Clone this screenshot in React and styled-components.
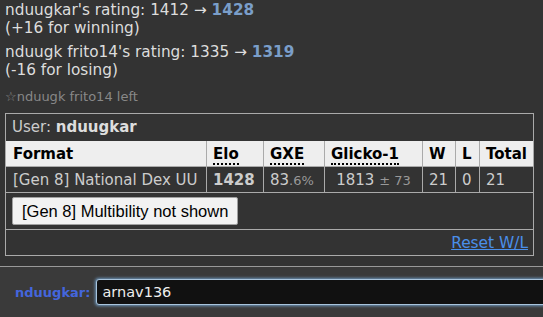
import React from "react";
import styled, { createGlobalStyle } from "styled-components";

const GlobalStyle = createGlobalStyle`
  html, body {
    margin: 0;
    padding: 0;
    background: #333;
  }
  body {
    font-family: "DejaVu Sans", Verdana, sans-serif;
    font-size: 15.3px;
    color: #ddd;
  }
`;

const Page = styled.div`
  width: 543px;
  height: 317px;
  display: flex;
  flex-direction: column;
  overflow: hidden;
`;

const ChatLog = styled.div`
  flex: 1;
  padding: 1px 9px 0 5px;
  overflow: hidden;
`;

const Message = styled.div`
  line-height: 18px;
  margin-bottom: 6px;
`;

const NewRating = styled.strong`
  color: #7a9ec9;
`;

const Notice = styled.div`
  font-size: 13px;
  color: #888;
  line-height: 16px;
  margin: 10px 0 8px;
`;

const Box = styled.div`
  border: 1px solid #aaa;
  background: #333;
`;

const UserRow = styled.div`
  height: 27px;
  line-height: 27px;
  padding-left: 6px;
  font-size: 15px;
  color: #ccc;
  strong {
    color: #ddd;
  }
`;

const Table = styled.table`
  width: 100%;
  table-layout: fixed;
  border-collapse: collapse;
  font-size: 15px;
  white-space: nowrap;
`;

const Th = styled.th`
  background: #eee;
  color: #000;
  text-align: left;
  height: 25px;
  padding: 0 6px;
  border: 1px solid #aaa;
  border-top: 0;
  width: ${(p) => (p.$w ? `${p.$w}px` : "auto")};
  &:first-child { border-left: 0; padding: 0 2px 0 7px; }
  &:last-child { border-right: 0; }
`;

const Abbr = styled.span`
  border-bottom: 2px dotted #000;
`;

const Td = styled.td`
  height: 25px;
  padding: 0 6px;
  color: #ccc;
  border: 1px solid #aaa;
  overflow: hidden;
  text-align: ${(p) => (p.$center ? "center" : "left")};
  &:first-child { border-left: 0; padding: 0 2px 0 7px; }
  &:last-child { border-right: 0; }
`;

const Faint = styled.small`
  font-size: 13px;
  color: #999;
`;

const ButtonRow = styled.div`
  height: 36px;
  display: flex;
  align-items: center;
  padding-left: 6px;
  border-bottom: 1px solid #aaa;
`;

const GreyButton = styled.button`
  height: 28px;
  padding: 0 9px;
  background: #f2f2f2;
  border: 1px solid #a0a0a0;
  border-radius: 2px;
  font-family: "Liberation Sans", Arial, sans-serif;
  font-size: 16.5px;
  color: #000;
`;

const LinkRow = styled.div`
  height: 25px;
  display: flex;
  justify-content: flex-end;
  align-items: center;
  padding-right: 5px;
`;

const Link = styled.a`
  color: #4a8fea;
  font-size: 15.4px;
  text-decoration: underline;
  cursor: pointer;
`;

const Compose = styled.div`
  height: 50px;
  border-top: 1px solid #999;
  background: #3a3a3a;
  display: flex;
  align-items: center;
  gap: 6px;
  padding-left: 15px;
`;

const Label = styled.span`
  color: #4466dd;
  font-weight: bold;
  font-size: 13px;
`;

const Input = styled.div`
  flex: 1;
  height: 24px;
  margin-right: -10px;
  background: #111;
  border: 1px solid #a8c4dc;
  border-radius: 3px;
  box-shadow: 0 0 3px 1px #6b93b8;
  color: #eee;
  font-size: 14.5px;
  line-height: 24px;
  padding-left: 5px;
`;

export default function App() {
  return (
    <Page>
      <GlobalStyle />
      <ChatLog>
        <Message>
          nduugkar's rating: 1412 → <NewRating>1428</NewRating>
          <br />
          (+16 for winning)
        </Message>
        <Message>
          nduugk frito14's rating: 1335 → <NewRating>1319</NewRating>
          <br />
          (-16 for losing)
        </Message>
        <Notice>☆nduugk frito14 left</Notice>
        <Box>
          <UserRow>
            User: <strong>nduugkar</strong>
          </UserRow>
          <Table>
            <thead>
              <tr>
                <Th $w={191}>Format</Th>
                <Th $w={44}><Abbr>Elo</Abbr></Th>
                <Th $w={48}><Abbr>GXE</Abbr></Th>
                <Th $w={85}><Abbr>Glicko-1</Abbr></Th>
                <Th $w={20}>W</Th>
                <Th $w={11}>L</Th>
                <Th>Total</Th>
              </tr>
            </thead>
            <tbody>
              <tr>
                <Td>[Gen 8] National Dex UU</Td>
                <Td><strong>1428</strong></Td>
                <Td>83<Faint>.6%</Faint></Td>
                <Td $center>1813 <Faint>± 73</Faint></Td>
                <Td>21</Td>
                <Td>0</Td>
                <Td>21</Td>
              </tr>
            </tbody>
          </Table>
          <ButtonRow>
            <GreyButton>[Gen 8] Multibility not shown</GreyButton>
          </ButtonRow>
          <LinkRow>
            <Link>Reset W/L</Link>
          </LinkRow>
        </Box>
      </ChatLog>
      <Compose>
        <Label>nduugkar:</Label>
        <Input>arnav136</Input>
      </Compose>
    </Page>
  );
}
